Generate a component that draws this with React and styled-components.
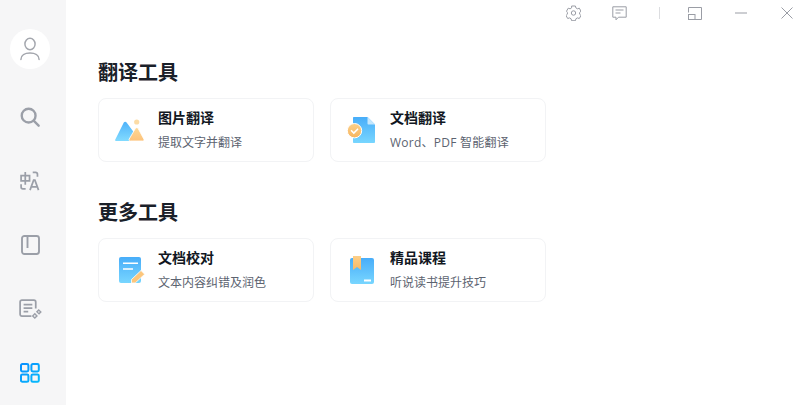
import React from 'react'
import styled, { createGlobalStyle } from 'styled-components'

const GlobalStyle = createGlobalStyle`
  html, body {
    margin: 0;
    padding: 0;
    height: 100%;
    background: #fff;
    overflow: hidden;
  }
  body {
    font-family: "Noto Sans CJK SC", "Noto Sans", sans-serif;
  }
`

const Page = styled.div`
  display: flex;
  width: 809px;
  height: 405px;
`
const Sidebar = styled.aside`
  width: 66px;
  flex: none;
  background: #f6f6f7;
  display: flex;
  flex-direction: column;
  align-items: center;
  padding: 29px 6px 0 0;
  box-sizing: border-box;
`
const Avatar = styled.div`
  width: 40px;
  height: 40px;
  border-radius: 50%;
  background: #fff;
  display: flex;
  align-items: center;
  justify-content: center;
`
const NavList = styled.nav`
  display: flex;
  flex-direction: column;
  align-items: center;
  margin-top: 16px;
`
const NavItem = styled.button`
  width: 48px;
  height: 64px;
  padding: 0;
  border: none;
  background: none;
  color: #9b9fa8;
  display: flex;
  align-items: center;
  justify-content: center;
`
const Main = styled.main`
  flex: 1;
  min-width: 0;
  display: flex;
  flex-direction: column;
`
const TopBar = styled.header`
  height: 26px;
  display: flex;
  justify-content: flex-end;
  align-items: center;
  margin-right: -1px;
`
const WinButton = styled.button`
  width: 46px;
  height: 26px;
  padding: 0;
  border: none;
  background: none;
  color: #9a9da5;
  display: flex;
  align-items: center;
  justify-content: center;
`
const Divider = styled.span`
  width: 1px;
  height: 12px;
  background: #dcdde0;
  margin: 0 12px 0 17px;
`
const Content = styled.div`
  padding: 0 0 0 32px;
`
const Section = styled.section`
  margin-top: ${p => p.$top}px;
`
const SectionTitle = styled.h2`
  margin: 0 0 12px;
  font-size: 20px;
  line-height: 28px;
  font-weight: 700;
  color: #1a2029;
`
const CardRow = styled.div`
  display: flex;
  gap: 16px;
`
const Card = styled.div`
  width: 216px;
  height: 64px;
  box-sizing: border-box;
  border: 1px solid #f2f3f5;
  border-radius: 8px;
  background: #fff;
  display: flex;
  align-items: center;
`
const CardIcon = styled.div`
  width: 59px;
  height: 62px;
  flex: none;
  box-sizing: border-box;
  padding-left: ${p => p.$shift}px;
  display: flex;
  align-items: center;
  justify-content: center;
`
const CardText = styled.div`
  display: flex;
  flex-direction: column;
  gap: 6px;
`
const CardTitle = styled.div`
  font-size: 14px;
  line-height: 20px;
  font-weight: 700;
  color: #111722;
`
const CardDesc = styled.div`
  font-family: "Open Sans", "Noto Sans CJK SC", sans-serif;
  font-size: 12px;
  line-height: 20px;
  letter-spacing: ${p => p.$spacing || 0}px;
  color: #5c6370;
`

const Grad = ({ id, from, to }) => (
  <linearGradient id={id} x1="0" y1="0" x2="0" y2="1">
    <stop offset="0" stopColor={from} />
    <stop offset="1" stopColor={to} />
  </linearGradient>
)

const UserIcon = () => (
  <svg width="20" height="24" viewBox="0 0 22 26" fill="none" stroke="#a3a6ad" strokeWidth="1.6">
    <ellipse cx="11" cy="7.5" rx="5.6" ry="6.3" />
    <path d="M1 24.5c0-4.6 4.4-7 10-7s10 2.4 10 7" strokeLinecap="round" />
  </svg>
)
const SearchIcon = () => (
  <svg width="20" height="20" viewBox="0 0 22 22" fill="none" stroke="currentColor" strokeWidth="2.6">
    <circle cx="9.5" cy="9.5" r="7.6" />
    <path d="M15 15l5.5 5.5" strokeLinecap="round" />
  </svg>
)
const TranslateIcon = () => (
  <svg width="20" height="20" viewBox="0 0 22 22" fill="none" stroke="currentColor" strokeWidth="1.9">
    <path d="M1.2 5.2h9.3v5.6H1.2zM5.8 1v14" />
    <path d="M1.2 14.5v3.2c0 1.2.8 2 2 2h3M14 1.6h3c1.4 0 2.2.8 2.2 2v2.6" />
    <path d="M11 21l4-11h1.4l4 11M12.4 17.5h6.6" />
  </svg>
)
const BookIcon = () => (
  <svg width="19" height="20" viewBox="0 0 19 20" fill="none" stroke="currentColor" strokeWidth="1.9">
    <rect x="1" y="1" width="17" height="18" rx="2.4" />
    <path d="M6.5 1.5v11.5" />
  </svg>
)
const NotesIcon = () => (
  <svg width="23" height="21" viewBox="0 0 25 22" fill="none" stroke="currentColor" strokeWidth="1.9">
    <path d="M13.500 18.200H3.200c-1.200 0-2-.8-2-2V2.900c0-1.200.8-2 2-2h13c1.200 0 2 .8 2 2v7" />
    <path d="M5 5.800h9.500M5 9.600h9.500M5 13.400h5" />
    <g fill="currentColor" stroke="none">
      <path d="M13.800 18l3.400-3.400 3.400 3.400-3.400 3.400zM16 18l1.200 1.200 1.200-1.200-1.200-1.200z" fillRule="evenodd" />
      <path d="M18.400 13.400l3-3 3.400 3.400-3 3zM20.600 13.600l1 1 1-1-1-1z" fillRule="evenodd" />
    </g>
  </svg>
)
const GridIcon = () => (
  <svg width="20" height="20" viewBox="0 0 20 20" fill="none" stroke="url(#gridBlue)" strokeWidth="2">
    <defs>
      <linearGradient id="gridBlue" gradientUnits="userSpaceOnUse" x1="0" y1="0" x2="20" y2="20">
        <stop offset="0" stopColor="#0a8dff" />
        <stop offset="1" stopColor="#06bdfb" />
      </linearGradient>
    </defs>
    <rect x="1" y="1" width="7.4" height="7.4" rx="1.4" />
    <rect x="11.4" y="1" width="7.4" height="7.4" rx="1.4" />
    <rect x="1" y="11.4" width="7.4" height="7.4" rx="1.4" />
    <rect x="11.4" y="11.4" width="7.4" height="7.4" rx="1.4" />
  </svg>
)

const GearIcon = () => (
  <svg width="15" height="16" viewBox="0 0 15 16" fill="none" stroke="currentColor" strokeWidth="1">
    <path d="M5.600 1h3.800l.5 1.900 1.500.9 1.900-.6 1.700 3-1.400 1.300v1.700l1.400 1.300-1.700 3-1.900-.6-1.500.9-.5 1.900H5.600l-.5-1.900-1.500-.9-1.900.6-1.700-3 1.400-1.300V7.500L.5 6.200l1.700-3 1.900.6 1.500-.9z" strokeLinejoin="round" />
    <circle cx="7.500" cy="8" r="2.200" />
  </svg>
)
const ChatIcon = () => (
  <svg width="15" height="15" viewBox="0 0 15 15" fill="none" stroke="currentColor" strokeWidth="1">
    <path d="M.8.800h13.400v10.400H6.500L4 13.800v-2.600H.8z" />
    <path d="M3.500 4h8M3.500 7h5" />
  </svg>
)
const RestoreIcon = () => (
  <svg width="14" height="13" viewBox="0 0 14 13" fill="none" stroke="currentColor" strokeWidth="1">
    <path d="M.5 5.500V.5h13v12H7" />
    <rect x=".5" y="7.500" width="6.500" height="5" />
  </svg>
)
const MinIcon = () => (
  <svg width="12" height="2" viewBox="0 0 12 2" fill="none" stroke="currentColor" strokeWidth="1">
    <path d="M0 1h12" />
  </svg>
)
const CloseIcon = () => (
  <svg width="12" height="12" viewBox="0 0 12 12" fill="none" stroke="currentColor" strokeWidth="1">
    <path d="M.5.500l11 11M11.500.500l-11 11" />
  </svg>
)

const ImageToolIcon = () => (
  <svg width="29" height="22" viewBox="0 0 29 22">
    <defs>
      <Grad id="imgBlue" from="#4fb2fa" to="#82dbff" />
      <Grad id="imgOrange" from="#fcd896" to="#fdc27a" />
    </defs>
    <circle cx="21.700" cy="3" r="2.600" fill="#fcdca6" />
    <path d="M8.800 3.400c.8-1 2-1 2.800 0l7 9.600-4 9H1.200C.3 22-.2 21.200.3 20.400z" fill="url(#imgBlue)" />
    <path d="M20.400 9.400c.7-1 2-1 2.700 0l5.700 10.600c.5 1 0 2-1.200 2H15.400c-1.200 0-1.700-1-1.200-2z" fill="url(#imgOrange)" stroke="#fff" strokeWidth=".8" />
  </svg>
)
const DocToolIcon = () => (
  <svg width="28" height="26" viewBox="0 0 28 26">
    <defs>
      <Grad id="docBlue" from="#48adf9" to="#78d6ff" />
      <Grad id="docOrange" from="#fbd08a" to="#f7b55f" />
    </defs>
    <path d="M7 0h13.500L28 7.500v17.300c0 .8-.4 1.200-1.200 1.200H7c-.8 0-1-.4-1-1.200V1c0-.7.3-1 1-1z" fill="url(#docBlue)" />
    <path d="M20.500 0L28 7.500h-6.500c-.6 0-1-.4-1-1z" fill="#c5e7fd" />
    <circle cx="7.500" cy="13.700" r="7.200" fill="url(#docOrange)" stroke="#fff" strokeWidth="1" />
    <path d="M4.500 13.700l2.300 2.300 3.800-3.800" fill="none" stroke="#fff" strokeWidth="1.600" strokeLinecap="round" />
  </svg>
)
const ProofToolIcon = () => (
  <svg width="26" height="26" viewBox="0 0 26 26">
    <defs>
      <Grad id="proofBlue" from="#48adf9" to="#78d6ff" />
    </defs>
    <rect x="0" y="0" width="22" height="26" rx="2" fill="url(#proofBlue)" />
    <path d="M4 5.400h15v1.600H4zM4 11.200h10v1.600H4z" fill="#fff" />
    <path d="M22 13.500l3.700 3.700-9.500 8.800h-3.700v-3.500z" fill="#fcc67c" stroke="#fff" strokeWidth=".8" />
  </svg>
)
const CourseToolIcon = () => (
  <svg width="24" height="28" viewBox="0 0 24 28">
    <defs>
      <Grad id="courseBlue" from="#48adf9" to="#78d6ff" />
      <Grad id="courseOrange" from="#fdcf88" to="#f9b965" />
    </defs>
    <rect x="0" y="2" width="24" height="26" rx="2" fill="url(#courseBlue)" />
    <path d="M3 0h8v14l-4-3-4 3z" fill="url(#courseOrange)" />
    <path d="M14 23.500h7v2h-7z" fill="#fff" />
  </svg>
)

const sections = [
  {
    title: '翻译工具',
    top: 32,
    tools: [
      { name: '图片翻译', desc: '提取文字并翻译', Icon: ImageToolIcon, shift: 2 },
      { name: '文档翻译', desc: 'Word、PDF 智能翻译', Icon: DocToolIcon, shift: 1, spacing: 0.25 },
    ],
  },
  {
    title: '更多工具',
    top: 36,
    tools: [
      { name: '文档校对', desc: '文本内容纠错及润色', Icon: ProofToolIcon, shift: 7 },
      { name: '精品课程', desc: '听说读书提升技巧', Icon: CourseToolIcon, shift: 3 },
    ],
  },
]

const App = () => {
  return (
    <Page>
      <GlobalStyle />
      <Sidebar>
        <Avatar><UserIcon /></Avatar>
        <NavList>
          <NavItem><SearchIcon /></NavItem>
          <NavItem><TranslateIcon /></NavItem>
          <NavItem><BookIcon /></NavItem>
          <NavItem><NotesIcon /></NavItem>
          <NavItem><GridIcon /></NavItem>
        </NavList>
      </Sidebar>
      <Main>
        <TopBar>
          <WinButton><GearIcon /></WinButton>
          <WinButton><ChatIcon /></WinButton>
          <Divider />
          <WinButton><RestoreIcon /></WinButton>
          <WinButton><MinIcon /></WinButton>
          <WinButton><CloseIcon /></WinButton>
        </TopBar>
        <Content>
          {sections.map(s => (
            <Section key={s.title} $top={s.top}>
              <SectionTitle>{s.title}</SectionTitle>
              <CardRow>
                {s.tools.map(({ name, desc, Icon, shift, spacing }) => (
                  <Card key={name}>
                    <CardIcon $shift={shift}><Icon /></CardIcon>
                    <CardText>
                      <CardTitle>{name}</CardTitle>
                      <CardDesc $spacing={spacing}>{desc}</CardDesc>
                    </CardText>
                  </Card>
                ))}
              </CardRow>
            </Section>
          ))}
        </Content>
      </Main>
    </Page>
  )
}

export default App
